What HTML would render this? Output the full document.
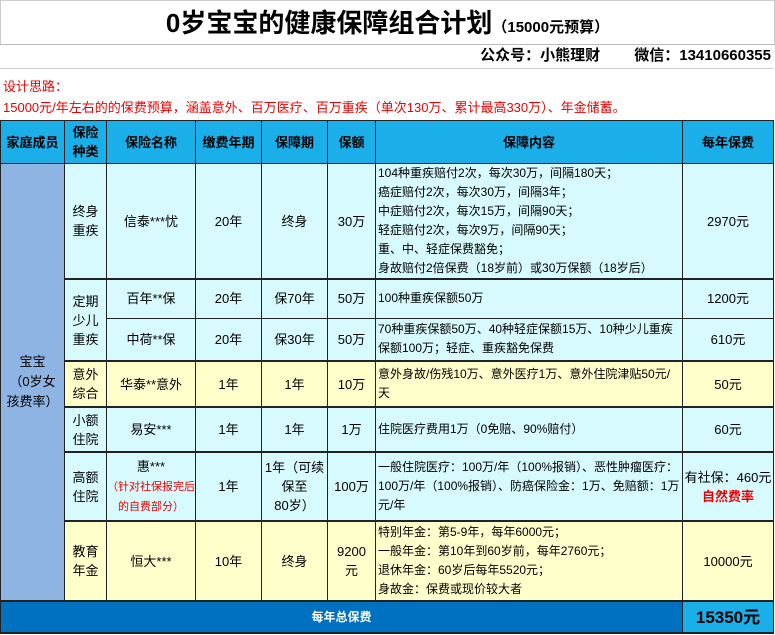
<!DOCTYPE html>
<html><head><meta charset="utf-8"><style>
body{margin:0;width:775px;height:635px;background:#fff;font-family:"Liberation Sans","Noto Sans CJK SC",sans-serif;font-size:12px;color:#000;position:relative;overflow:hidden}
.t{position:absolute;left:0;top:0;width:773px;height:43px;border:1px solid #ccc;border-bottom:1px solid #bbb;text-align:center;line-height:44px;font-size:26px;font-weight:bold}
.t small{font-size:15px;font-weight:bold}
.s{position:absolute;left:0;top:44px;width:771px;height:24px;border-bottom:1px solid #ccc;text-align:right;font-size:15px;font-weight:bold;line-height:24px;padding-right:2px}
.r{position:absolute;left:3px;color:#e00;font-size:13px}
table{position:absolute;left:0;top:120px;border-collapse:collapse;table-layout:fixed;width:773px}
td{border:1px solid #222;text-align:center;padding:0;line-height:19px;font-size:13px}
.h td{background:#1aafe8;font-weight:bold;font-size:13px}
.c td{background:#d6fafd}
.y td{background:#ffffcc}
td.f{background:#8db4e2;line-height:20px}
td.l{text-align:left;padding-left:2px;font-size:12px;line-height:19px}
.sec td{border-top:2px solid #222}
.tot td{background:#0070c0;color:#fff;font-weight:bold;font-size:12px;border-bottom:2px solid #222}
.tot td.v{background:#1aafe8;color:#000;font-size:17px}
.red{color:#e00}
</style></head><body>
<div class="t">0岁宝宝的健康保障组合计划<small>（15000元预算）</small></div>
<div class="s">公众号：小熊理财　　&nbsp;微信：13410660355</div>
<div class="r" style="top:76px">设计思路：</div>
<div class="r" style="top:97px">15000元/年左右的的保费预算，涵盖意外、百万医疗、百万重疾（单次130万、累计最高330万）、年金储蓄。</div>
<table>
<colgroup><col style="width:64px"><col style="width:42px"><col style="width:89px"><col style="width:66px"><col style="width:66px"><col style="width:48px"><col style="width:307px"><col style="width:91px"></colgroup>
<tr class="h" style="height:43px"><td>家庭成员</td><td>保险<br>种类</td><td>保险名称</td><td>缴费年期</td><td>保障期</td><td>保额</td><td>保障内容</td><td>每年保费</td></tr>
<tr class="c" style="height:114px"><td class="f" rowspan="7">宝宝<br>（0岁女<br>孩费率）</td><td>终身<br>重疾</td><td>信泰***忧</td><td>20年</td><td>终身</td><td>30万</td><td class="l">104种重疾赔付2次，每次30万，间隔180天；<br>癌症赔付2次，每次30万，间隔3年；<br>中症赔付2次，每次15万，间隔90天；<br>轻症赔付2次，每次9万，间隔90天；<br>重、中、轻症保费豁免；<br>身故赔付2倍保费（18岁前）或30万保额（18岁后）</td><td>2970元</td></tr>
<tr class="c sec" style="height:39px"><td rowspan="2">定期<br>少儿<br>重疾</td><td>百年**保</td><td>20年</td><td>保70年</td><td>50万</td><td class="l">100种重疾保额50万</td><td>1200元</td></tr>
<tr class="c" style="height:43px"><td>中荷**保</td><td>20年</td><td>保30年</td><td>50万</td><td class="l">70种重疾保额50万、40种轻症保额15万、10种少儿重疾保额100万；轻症、重疾豁免保费</td><td>610元</td></tr>
<tr class="y sec" style="height:46px"><td>意外<br>综合</td><td>华泰**意外</td><td>1年</td><td>1年</td><td>10万</td><td class="l">意外身故/伤残10万、意外医疗1万、意外住院津贴50元/天</td><td>50元</td></tr>
<tr class="c sec" style="height:45px"><td>小额<br>住院</td><td>易安***</td><td>1年</td><td>1年</td><td>1万</td><td class="l">住院医疗费用1万（0免赔、90%赔付）</td><td>60元</td></tr>
<tr class="c sec" style="height:69px"><td>高额<br>住院</td><td>惠***<br><span class="red" style="font-size:11px;line-height:17px">（针对社保报完后的自费部分）</span></td><td>1年</td><td>1年（可续保至<br>80岁）</td><td>100万</td><td class="l">一般住院医疗：100万/年（100%报销）、恶性肿瘤医疗：100万/年（100%报销）、防癌保险金：1万、免赔额：1万元/年</td><td>有社保：460元<br><b class="red">自然费率</b></td></tr>
<tr class="y sec" style="height:80px"><td>教育<br>年金</td><td>恒大***</td><td>10年</td><td>终身</td><td>9200<br>元</td><td class="l">特别年金：第5-9年，每年6000元；<br>一般年金：第10年到60岁前，每年2760元；<br>退休年金：60岁后每年5520元；<br>身故金：保费或现价较大者</td><td>10000元</td></tr>
<tr class="tot sec" style="height:32px"><td colspan="7">每年总保费</td><td class="v">15350元</td></tr>
</table>
</body></html>
